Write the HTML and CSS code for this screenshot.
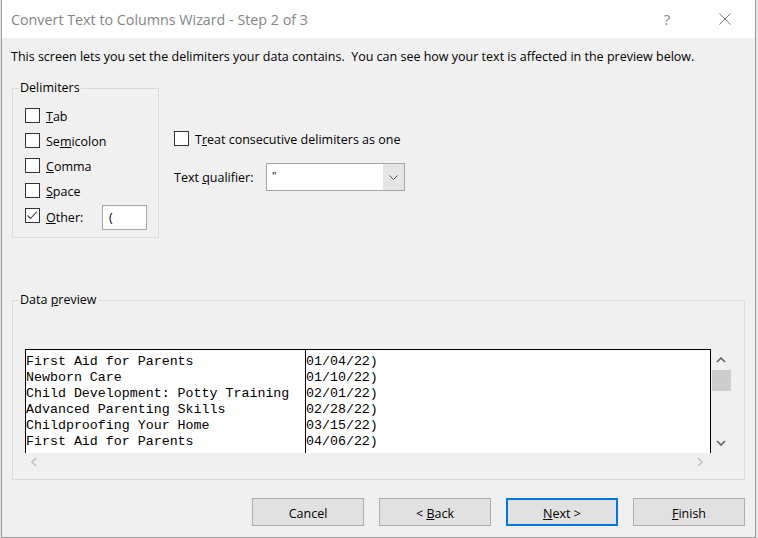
FILE: index.html
```html
<!DOCTYPE html>
<html>
<head>
<meta charset="utf-8">
<title>Convert Text to Columns Wizard</title>
<link rel="stylesheet" href="styles.css">
</head>
<body>
<div class="dialog">
  <div class="titlebar">
    <span class="title">Convert Text to Columns Wizard - Step 2 of 3</span>
    <span class="help">?</span>
    <span class="close"><svg width="12" height="12" viewBox="0 0 12 12"><path d="M0.5 0.5L11.5 11.5M11.5 0.5L0.5 11.5" stroke="#7a7a7a" stroke-width="1" fill="none"/></svg></span>
  </div>
  <div class="content">
    <p class="desc">This screen lets you set the delimiters your data contains.&nbsp; You can see how your text is affected in the preview below.</p>
    <div class="top-row">
      <fieldset class="group delims">
        <legend>Delimiters</legend>
        <div class="check row"><span class="box"></span><span class="lbl"><u>T</u>ab</span></div>
        <div class="check row"><span class="box"></span><span class="lbl">Se<u>m</u>icolon</span></div>
        <div class="check row"><span class="box"></span><span class="lbl"><u>C</u>omma</span></div>
        <div class="check row"><span class="box"></span><span class="lbl"><u>S</u>pace</span></div>
        <div class="check other"><span class="box"><svg width="13" height="13" viewBox="0 0 13 13"><path d="M1.5 6.5L4.5 9.5L11 2.5" stroke="#333" stroke-width="1.1" fill="none"/></svg></span><span class="lbl"><u>O</u>ther:</span><span class="textbox">(</span></div>
      </fieldset>
      <div class="options">
        <div class="check row"><span class="box"></span><span class="lbl">T<u>r</u>eat consecutive delimiters as one</span></div>
        <div class="qualifier">
          <span class="qlabel">Text <u>q</u>ualifier:</span>
          <div class="combo">
            <span class="combo-value">"</span>
            <span class="combo-btn"><svg width="9" height="5" viewBox="0 0 9 5"><path d="M0.5 0.5L4.5 4.5L8.5 0.5" stroke="#555" stroke-width="1" fill="none"/></svg></span>
          </div>
        </div>
      </div>
    </div>
    <fieldset class="group preview">
      <legend>Data <u>p</u>review</legend>
      <div class="preview-area">
        <div class="grid-box">
          <div class="col col1">
            <div class="line">First Aid for Parents</div>
            <div class="line">Newborn Care</div>
            <div class="line">Child Development: Potty Training</div>
            <div class="line">Advanced Parenting Skills</div>
            <div class="line">Childproofing Your Home</div>
            <div class="line">First Aid for Parents</div>
          </div>
          <div class="col col2">
            <div class="line">01/04/22)</div>
            <div class="line">01/10/22)</div>
            <div class="line">02/01/22)</div>
            <div class="line">02/28/22)</div>
            <div class="line">03/15/22)</div>
            <div class="line">04/06/22)</div>
          </div>
        </div>
        <div class="vscroll">
          <div class="arrow"><svg width="10" height="6" viewBox="0 0 10 6"><path d="M1 5L5 1L9 5" stroke="#606060" stroke-width="1.6" fill="none"/></svg></div>
          <div class="thumb"></div>
          <div class="spacer"></div>
          <div class="arrow"><svg width="10" height="6" viewBox="0 0 10 6"><path d="M1 1L5 5L9 1" stroke="#606060" stroke-width="1.6" fill="none"/></svg></div>
        </div>
        <div class="hscroll">
          <div class="harrow"><svg width="6" height="10" viewBox="0 0 6 10"><path d="M5 1L1 5L5 9" stroke="#c4c4c4" stroke-width="1.6" fill="none"/></svg></div>
          <div class="spacer"></div>
          <div class="harrow"><svg width="6" height="10" viewBox="0 0 6 10"><path d="M1 1L5 5L1 9" stroke="#c4c4c4" stroke-width="1.6" fill="none"/></svg></div>
        </div>
        <div class="corner"></div>
      </div>
    </fieldset>
    <div class="buttons">
      <button class="btn">Cancel</button>
      <button class="btn">&lt; <u>B</u>ack</button>
      <button class="btn default"><u>N</u>ext &gt;</button>
      <button class="btn"><u>F</u>inish</button>
    </div>
  </div>
</div>
</body>
</html>
```
FILE: styles.css
```css
* { box-sizing: border-box; }
html, body { margin: 0; padding: 0; }
body {
  width: 758px;
  height: 538px;
  overflow: hidden;
  background: #e6e6e6;
  font-family: "Open Sans", "Noto Sans", sans-serif;
  font-size: 12.5px;
  color: #000;
}
.dialog {
  margin-left: 1px;
  width: 755px;
  height: 538px;
  border: 1px solid #9a9a9a;
  border-top: none;
  background: #f0f0f0;
  display: flex;
  flex-direction: column;
}
.titlebar {
  height: 38px;
  background: #fff;
  display: flex;
  align-items: center;
  padding-left: 9px;
}
.title {
  flex: 1;
  font-size: 14.3px;
  color: #858585;
  white-space: nowrap;
}
.help {
  width: 20px;
  text-align: center;
  font-size: 15px;
  color: #8a8a8a;
  margin-right: 33px;
}
.close {
  width: 30px;
  height: 12px;
  display: flex;
  justify-content: center;
  margin-right: 15px;
}
.content {
  flex: 1;
  padding: 0 10px;
  display: flex;
  flex-direction: column;
}
.desc {
  margin: 11px 0 0 -1px;
  line-height: 16px;
  white-space: nowrap;
}
.top-row {
  display: flex;
  margin-top: 15px;
}
fieldset.group {
  margin: 0;
  border: 1px solid #dcdcdc;
  min-width: 0;
}
fieldset.group legend {
  padding: 0 1px;
  margin-left: -6px;
  line-height: 16px;
}
fieldset.delims {
  width: 147px;
  padding: 12px 11px 7px 12px;
}
.check {
  display: flex;
  align-items: flex-start;
}
.check.row {
  height: 15px;
  margin-bottom: 10px;
}
.box {
  width: 15px;
  height: 15px;
  border: 1px solid #333;
  background: #fff;
  flex: none;
  display: flex;
}
.lbl {
  margin-left: 6px;
  line-height: 17px;
  white-space: nowrap;
}
.check.other {
  height: 25px;
  margin-top: -3px;
}
.check.other .box { margin-top: 3px; }
.check.other .lbl { line-height: 26px; }
.textbox {
  margin-left: auto;
  width: 45px;
  height: 25px;
  background: #fff;
  border: 1px solid #a6a6a6;
  padding-left: 6px;
  line-height: 23px;
}
.options {
  margin-left: 15px;
  padding-top: 51px;
}
.options .check.row { margin-bottom: 0; }
.qualifier {
  display: flex;
  align-items: center;
  margin-top: 17px;
}
.qlabel {
  width: 92px;
  white-space: nowrap;
}
.combo {
  width: 139px;
  height: 28px;
  border: 1px solid #a6a6a6;
  background: #fff;
  display: flex;
}
.combo-value {
  flex: 1;
  padding-left: 5px;
  line-height: 24px;
  font-size: 11px;
}
.combo-btn {
  width: 21px;
  background: #e5e5e5;
  display: flex;
  align-items: center;
  justify-content: center;
}
fieldset.preview {
  margin-top: 54px;
  padding: 41px 13px 8px 12px;
}
.preview-area {
  display: grid;
  grid-template-columns: 686px 20px;
  grid-template-rows: 104px 18px;
}
.grid-box {
  border: 1px solid #000;
  border-bottom: none;
  background: #fff;
  display: flex;
  overflow: hidden;
}
.col {
  padding-top: 4px;
  font-family: "Liberation Mono", monospace;
  font-size: 13.3px;
  line-height: 16px;
}
.line {
  white-space: pre;
  height: 16px;
}
.col1 {
  width: 280px;
  flex: none;
  border-right: 1px solid #000;
}
.vscroll {
  display: flex;
  flex-direction: column;
}
.arrow {
  height: 21px;
  display: flex;
  align-items: center;
  justify-content: center;
}
.thumb {
  height: 21px;
  margin-left: 1px;
  background: #cdcdcd;
}
.spacer { flex: 1; }
.hscroll {
  display: flex;
  padding-right: 2px;
}
.harrow {
  width: 18px;
  display: flex;
  align-items: center;
  justify-content: center;
}
.buttons {
  margin-top: 18px;
  display: flex;
  justify-content: flex-end;
  gap: 15px;
}
.btn {
  width: 112px;
  height: 28px;
  background: #e1e1e1;
  border: 1px solid #adadad;
  font-family: inherit;
  font-size: 12.5px;
  color: #000;
  padding: 2px 0 0;
}
.btn.default {
  border: 2px solid #0078d7;
}
```
